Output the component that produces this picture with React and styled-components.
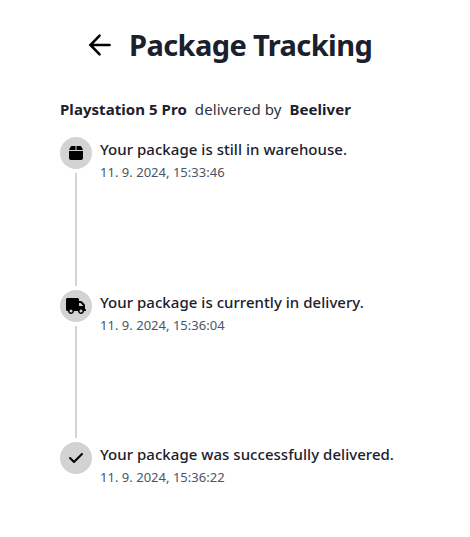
import React from "react";
import styled, { createGlobalStyle } from "styled-components";
import { FaBox, FaTruck, FaCheck } from "react-icons/fa6";

const GlobalStyle = createGlobalStyle`
  * { box-sizing: border-box; }
  body { margin: 0; background: #fff; color: #1a202c; font-family: "Segoe UI", "Noto Sans", "Open Sans", sans-serif; }
`;

const Page = styled.main`
  width: 470px;
  height: 537px;
  padding-top: 24px;
`;

const Header = styled.header`
  display: flex;
  align-items: center;
  height: 42px;
  padding-left: 83px;
  gap: 14px;
`;

const BackIcon = styled.svg`
  flex: none;
  width: 32px;
  height: 32px;
  fill: none;
  stroke: #000;
  stroke-width: 2.5;
  stroke-linecap: round;
  stroke-linejoin: miter;
`;

const Title = styled.h1`
  margin: 0;
  font-size: 29px;
  line-height: 42px;
  font-weight: 700;
  letter-spacing: -0.6px;
  white-space: nowrap;
`;

const Summary = styled.p`
  display: flex;
  gap: 8px;
  margin: 31px 0 0 60px;
  height: 24px;
  font-size: 15px;
  line-height: 24px;
  white-space: nowrap;
`;

const Name = styled.strong`
  font-weight: 700;
  letter-spacing: 0.05px;
`;

const Light = styled.span`
  font-weight: 400;
  letter-spacing: 0.09px;
  color: #2d3340;
`;

const Steps = styled.ol`
  list-style: none;
  margin: 16px 0 0 60px;
  padding: 0;
`;

const Step = styled.li`
  display: flex;
  gap: 8px;
  height: ${(p) => p.$height}px;
`;

const Rail = styled.div`
  display: flex;
  flex-direction: column;
  align-items: center;
  width: 32px;
`;

const Indicator = styled.div`
  display: flex;
  flex: none;
  align-items: center;
  justify-content: center;
  width: 32px;
  height: 32px;
  border-radius: 50%;
  background: #d3d3d3;
  color: #000;

  svg {
    flex: none;
    width: 20px;
    height: 16px;
  }
`;

const Separator = styled.div`
  flex: 1;
  width: 2px;
  margin: 4px 0;
  background: #d3d3d3;
`;

const StepTitle = styled.h3`
  margin: 0;
  font-size: 15px;
  line-height: 24px;
  font-weight: 500;
  letter-spacing: 0.035px;
  white-space: nowrap;
`;

const StepTime = styled.p`
  margin: 1px 0 0;
  font-size: 13px;
  line-height: 21px;
  font-weight: 400;
  letter-spacing: 0.02px;
  color: #4a5568;
  white-space: nowrap;
`;

const steps = [
  { icon: FaBox, title: "Your package is still in warehouse.", time: "11. 9. 2024, 15:33:46", height: 153 },
  { icon: FaTruck, title: "Your package is currently in delivery.", time: "11. 9. 2024, 15:36:04", height: 152 },
  { icon: FaCheck, title: "Your package was successfully delivered.", time: "11. 9. 2024, 15:36:22", height: 46 },
];

export default function App() {
  return (
    <Page>
      <GlobalStyle />
      <Header>
        <BackIcon viewBox="0 0 32 32" aria-label="Back">
          <path d="M16.6 6.7 L7.4 16 L16.6 25.3 M8 16 H26.6" />
        </BackIcon>
        <Title>Package Tracking</Title>
      </Header>
      <Summary>
        <Name>Playstation 5 Pro</Name>
        <Light>delivered by</Light>
        <Name>Beeliver</Name>
      </Summary>
      <Steps>
        {steps.map(({ icon: Icon, title, time, height }, i) => (
          <Step key={title} $height={height}>
            <Rail>
              <Indicator><Icon /></Indicator>
              {i < steps.length - 1 && <Separator />}
            </Rail>
            <div>
              <StepTitle>{title}</StepTitle>
              <StepTime>{time}</StepTime>
            </div>
          </Step>
        ))}
      </Steps>
    </Page>
  );
}
